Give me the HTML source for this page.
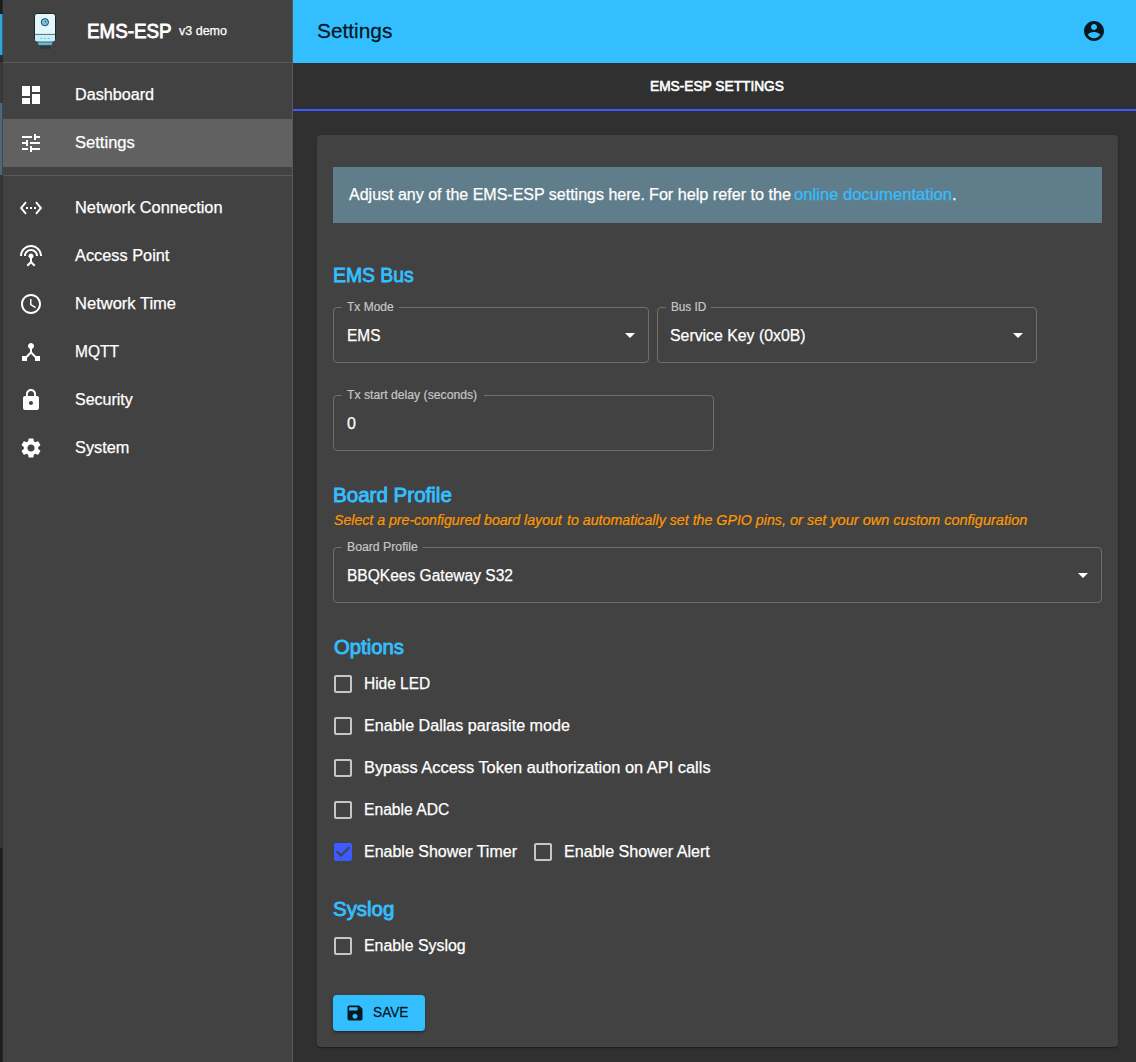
<!DOCTYPE html>
<html><head><meta charset="utf-8"><title>EMS-ESP</title>
<style>
*{box-sizing:border-box;margin:0;padding:0}
html,body{width:1136px;height:1062px;overflow:hidden;background:#303030;font-family:"Liberation Sans",sans-serif;color:#fff}
div,svg{position:absolute}
svg{display:block}
.t{white-space:nowrap;line-height:1;transform-origin:0 0}
.f{height:56px;border:1px solid #6f6f6f;border-radius:4px}
.n{height:3px;background:#424242}
</style></head><body>

<div style="left:0;top:0px;width:3px;height:14px;background:#1c1c1c"></div>
<div style="left:0;top:14px;width:3px;height:41px;background:#2ea6dc"></div>
<div style="left:0;top:55px;width:3px;height:7px;background:#2a2a2a"></div>
<div style="left:0;top:62px;width:3px;height:41px;background:#3a3a3a"></div>
<div style="left:0;top:103px;width:3px;height:72px;background:#4f6878"></div>
<div style="left:0;top:175px;width:3px;height:673px;background:#363636"></div>
<div style="left:0;top:848px;width:3px;height:214px;background:#1e1e1e"></div>
<div style="left:2px;top:0;width:1px;height:1062px;background:rgba(48,48,48,.55)"></div>
<div style="left:3px;top:0;width:290px;height:1062px;background:#424242;border-right:1px solid #595959"></div>
<div style="left:3px;top:62px;width:289px;height:1px;background:#595959"></div>
<div style="left:3px;top:119px;width:289px;height:48px;background:#616161"></div>
<div style="left:3px;top:175px;width:289px;height:1px;background:#595959"></div>
<svg style="left:30px;top:10px;width:30px;height:42px" viewBox="30 10 30 42">
<rect x="40.2" y="45" width="1.3" height="3.8" fill="#2b2b2b"/><rect x="43" y="45" width="1.3" height="3.8" fill="#2b2b2b"/><rect x="45.8" y="45" width="1.3" height="3.8" fill="#2b2b2b"/><rect x="48.6" y="45" width="1.3" height="3.8" fill="#2b2b2b"/>
<path d="M37.8 41.5h14.6v2.2q0 1.6-1.6 1.6h-11.4q-1.6 0-1.6-1.600z" fill="#6bbbd9" stroke="#2a4a58" stroke-width=".5"/>
<rect x="34.5" y="13.5" width="21" height="28.300" rx="2.600" fill="#e1f7fd" stroke="#151515" stroke-width=".9"/>
<path d="M35 34.500h20v4.700q0 2.200-2.200 2.200h-15.600q-2.200 0-2.200-2.200z" fill="#c4effb"/>
<rect x="34.600" y="33.900" width="20.800" height=".8" fill="#3c4a50"/>
<circle cx="44.900" cy="22.200" r="3.600" fill="#7ccbe8" stroke="#1d2c33" stroke-width=".9"/>
<circle cx="44.900" cy="22.200" r="1.900" fill="none" stroke="#5fb3d3" stroke-width=".6"/>
<circle cx="45.500" cy="21.600" r=".6" fill="#1d2c33"/>
<rect x="40.400" y="38" width="1.700" height=".8" fill="#7f9aa3"/><rect x="44.100" y="38" width="1.700" height=".8" fill="#7f9aa3"/><rect x="47.900" y="38" width="1.700" height=".8" fill="#7f9aa3"/>
</svg>
<svg class="i" style="left:19px;top:83px;width:24px;height:24px;fill:#fff" viewBox="0 0 24 24"><path d="M3 13h8V3H3v10zm0 8h8v-6H3v6zm10 0h8V11h-8v10zm0-18v6h8V3h-8z"/></svg>
<svg class="i" style="left:19px;top:131px;width:24px;height:24px;fill:#fff" viewBox="0 0 24 24"><path d="M3 17v2h6v-2H3zM3 5v2h10V5H3zm10 16v-2h8v-2h-8v-2h-2v6h2zM7 9v2H3v2h4v2h2V9H7zm14 4v-2H11v2h10zm-6-4h2V7h4V5h-4V3h-2v6z"/></svg>
<svg class="i" style="left:19px;top:196px;width:24px;height:24px;fill:#fff" viewBox="0 0 24 24"><path d="M7.77 6.76L6.23 5.48.82 12l5.41 6.52 1.54-1.28L3.42 12l4.35-5.24zM7 13h2v-2H7v2zm10-2h-2v2h2v-2zm-6 2h2v-2h-2v2zm6.77-7.52l-1.54 1.28L20.58 12l-4.35 5.24 1.54 1.28L23.18 12l-5.41-6.52z"/></svg>
<svg class="i" style="left:19px;top:244px;width:24px;height:24px;fill:#fff" viewBox="0 0 24 24"><path d="M12 5c-3.87 0-7 3.13-7 7h2c0-2.76 2.24-5 5-5s5 2.24 5 5h2c0-3.87-3.13-7-7-7zm1 9.29c.88-.39 1.5-1.26 1.5-2.29 0-1.38-1.12-2.5-2.5-2.5S9.5 10.62 9.5 12c0 1.02.62 1.9 1.5 2.29v3.3L7.59 21 9 22.41l3-3 3 3L16.41 21 13 17.59v-3.3zM12 1C5.93 1 1 5.93 1 12h2c0-4.97 4.03-9 9-9s9 4.03 9 9h2c0-6.07-4.93-11-11-11z"/></svg>
<svg class="i" style="left:19px;top:292px;width:24px;height:24px;fill:#fff" viewBox="0 0 24 24"><path d="M11.99 2C6.47 2 2 6.48 2 12s4.47 10 9.99 10C17.52 22 22 17.52 22 12S17.52 2 11.99 2zM12 20c-4.42 0-8-3.58-8-8s3.58-8 8-8 8 3.58 8 8-3.58 8-8 8zM12.5 7H11v6l5.25 3.15.75-1.23-4.5-2.67z"/></svg>
<svg class="i" style="left:19px;top:340px;width:24px;height:24px;fill:#fff" viewBox="0 0 24 24"><path d="M17 16l-4-4V8.82C14.16 8.4 15 7.3 15 6c0-1.66-1.34-3-3-3S9 4.34 9 6c0 1.3.84 2.4 2 2.82V12l-4 4H3v5h5v-3.05l4-4.2 4 4.2V21h5v-5h-4z"/></svg>
<svg class="i" style="left:19px;top:388px;width:24px;height:24px;fill:#fff" viewBox="0 0 24 24"><path d="M18 8h-1V6c0-2.76-2.24-5-5-5S7 3.24 7 6v2H6c-1.1 0-2 .9-2 2v10c0 1.1.9 2 2 2h12c1.1 0 2-.9 2-2V10c0-1.1-.9-2-2-2zm-6 9c-1.1 0-2-.9-2-2s.9-2 2-2 2 .9 2 2-.9 2-2 2zm3.1-9H8.9V6c0-1.71 1.39-3.1 3.1-3.1 1.71 0 3.1 1.39 3.1 3.1v2z"/></svg>
<svg class="i" style="left:19px;top:436px;width:24px;height:24px;fill:#fff" viewBox="0 0 24 24"><path d="M19.14 12.94c.04-.3.06-.61.06-.94 0-.32-.02-.64-.07-.94l2.03-1.58c.18-.14.23-.41.12-.61l-1.92-3.32c-.12-.22-.37-.29-.59-.22l-2.39.96c-.5-.38-1.03-.7-1.62-.94l-.36-2.54c-.04-.24-.24-.41-.48-.41h-3.84c-.24 0-.43.17-.47.41l-.36 2.54c-.59.24-1.13.57-1.62.94l-2.39-.96c-.22-.08-.47 0-.59.22L2.74 8.87c-.12.21-.08.47.12.61l2.03 1.58c-.05.3-.09.63-.09.94s.02.64.07.94l-2.03 1.58c-.18.14-.23.41-.12.61l1.92 3.32c.12.22.37.29.59.22l2.39-.96c.5.38 1.03.7 1.62.94l.36 2.54c.05.24.24.41.48.41h3.84c.24 0 .44-.17.47-.41l.36-2.54c.59-.24 1.13-.56 1.62-.94l2.39.96c.22.08.47 0 .59-.22l1.92-3.32c.12-.22.07-.47-.12-.61l-2.01-1.58zM12 15.6c-1.98 0-3.6-1.62-3.6-3.6s1.62-3.6 3.6-3.6 3.6 1.62 3.6 3.6-1.62 3.6-3.6 3.6z"/></svg>
<div style="left:293px;top:0;width:843px;height:63px;background:#33bfff"></div>
<svg class="i" style="left:1082px;top:19px;width:24px;height:24px;fill:rgba(0,0,0,.87)" viewBox="0 0 24 24"><path d="M12 2C6.48 2 2 6.48 2 12s4.48 10 10 10 10-4.48 10-10S17.52 2 12 2zm0 3c1.66 0 3 1.34 3 3s-1.34 3-3 3-3-1.34-3-3 1.34-3 3-3zm0 14.2c-2.5 0-4.71-1.28-6-3.22.03-1.99 4-3.08 6-3.08 1.99 0 5.97 1.09 6 3.08-1.29 1.94-3.5 3.22-6 3.22z"/></svg>
<div style="left:293px;top:109px;width:843px;height:2px;background:#3d5afe"></div>
<div style="left:317px;top:135px;width:801px;height:912px;background:#424242;border-radius:4px;box-shadow:0 2px 1px -1px rgba(0,0,0,.2),0 1px 1px 0 rgba(0,0,0,.14),0 1px 3px 0 rgba(0,0,0,.12)"></div>
<div style="left:333px;top:167px;width:769px;height:56px;background:#607d8b"></div>
<div class="f" style="left:333px;top:307px;width:316px"></div>
<div class="n" style="left:342px;top:306px;width:57.19999999999999px"></div>
<svg class="i" style="left:618px;top:323px;width:24px;height:24px;fill:#fff" viewBox="0 0 24 24"><path d="M7 10l5 5 5-5z"/></svg>
<div class="f" style="left:657px;top:307px;width:380px"></div>
<div class="n" style="left:666px;top:306px;width:45.299999999999955px"></div>
<svg class="i" style="left:1006px;top:323px;width:24px;height:24px;fill:#fff" viewBox="0 0 24 24"><path d="M7 10l5 5 5-5z"/></svg>
<div class="f" style="left:333px;top:395px;width:381px"></div>
<div class="n" style="left:342px;top:394px;width:142px"></div>
<div class="f" style="left:333px;top:547px;width:769px"></div>
<div class="n" style="left:342.2px;top:546px;width:80.80000000000001px"></div>
<svg class="i" style="left:1071px;top:563px;width:24px;height:24px;fill:#fff" viewBox="0 0 24 24"><path d="M7 10l5 5 5-5z"/></svg>
<svg class="i" style="left:331px;top:672px;width:24px;height:24px;fill:#c6c6c6" viewBox="0 0 24 24"><path d="M19 5v14H5V5h14m0-2H5c-1.1 0-2 .9-2 2v14c0 1.1.9 2 2 2h14c1.1 0 2-.9 2-2V5c0-1.1-.9-2-2-2z"/></svg>
<svg class="i" style="left:331px;top:714px;width:24px;height:24px;fill:#c6c6c6" viewBox="0 0 24 24"><path d="M19 5v14H5V5h14m0-2H5c-1.1 0-2 .9-2 2v14c0 1.1.9 2 2 2h14c1.1 0 2-.9 2-2V5c0-1.1-.9-2-2-2z"/></svg>
<svg class="i" style="left:331px;top:756px;width:24px;height:24px;fill:#c6c6c6" viewBox="0 0 24 24"><path d="M19 5v14H5V5h14m0-2H5c-1.1 0-2 .9-2 2v14c0 1.1.9 2 2 2h14c1.1 0 2-.9 2-2V5c0-1.1-.9-2-2-2z"/></svg>
<svg class="i" style="left:331px;top:798px;width:24px;height:24px;fill:#c6c6c6" viewBox="0 0 24 24"><path d="M19 5v14H5V5h14m0-2H5c-1.1 0-2 .9-2 2v14c0 1.1.9 2 2 2h14c1.1 0 2-.9 2-2V5c0-1.1-.9-2-2-2z"/></svg>
<svg class="i" style="left:331px;top:840px;width:24px;height:24px;fill:#3d5afe" viewBox="0 0 24 24"><path d="M19 3H5c-1.11 0-2 .9-2 2v14c0 1.1.89 2 2 2h14c1.11 0 2-.9 2-2V5c0-1.1-.89-2-2-2zm-9 14l-5-5 1.41-1.41L10 14.17l7.59-7.59L19 8l-9 9z"/></svg>
<svg class="i" style="left:531px;top:840px;width:24px;height:24px;fill:#c6c6c6" viewBox="0 0 24 24"><path d="M19 5v14H5V5h14m0-2H5c-1.1 0-2 .9-2 2v14c0 1.1.9 2 2 2h14c1.1 0 2-.9 2-2V5c0-1.1-.9-2-2-2z"/></svg>
<svg class="i" style="left:331px;top:934px;width:24px;height:24px;fill:#c6c6c6" viewBox="0 0 24 24"><path d="M19 5v14H5V5h14m0-2H5c-1.1 0-2 .9-2 2v14c0 1.1.9 2 2 2h14c1.1 0 2-.9 2-2V5c0-1.1-.9-2-2-2z"/></svg>
<div style="left:333px;top:995px;width:92px;height:36px;background:#33bfff;border-radius:4px;box-shadow:0 3px 1px -2px rgba(0,0,0,.2),0 2px 2px 0 rgba(0,0,0,.14),0 1px 5px 0 rgba(0,0,0,.12)"></div>
<svg class="i" style="left:345px;top:1003px;width:20px;height:20px;fill:rgba(0,0,0,.87)" viewBox="0 0 24 24"><path d="M17 3H5c-1.11 0-2 .9-2 2v14c0 1.1.89 2 2 2h14c1.1 0 2-.9 2-2V7l-4-4zm-5 16c-1.66 0-3-1.34-3-3s1.34-3 3-3 3 1.34 3 3-1.34 3-3 3zm3-10H5V5h10v4z"/></svg>
<div class="t" id="brand" style="left:87.00px;top:21.00px;font-size:20px;-webkit-text-stroke:.85px;transform:scaleX(0.9390)">EMS-ESP</div>
<div class="t" id="ver" style="left:179.00px;top:24.00px;font-size:13px;-webkit-text-stroke:.25px;transform:scaleX(0.9627)">v3 demo</div>
<div class="t" id="m1" style="left:75.00px;top:87.00px;font-size:16px;-webkit-text-stroke:.25px;transform:scaleX(1.0104)">Dashboard</div>
<div class="t" id="m2" style="left:75.00px;top:135.00px;font-size:16px;-webkit-text-stroke:.25px;transform:scaleX(1.0350)">Settings</div>
<div class="t" id="m3" style="left:75.00px;top:200.00px;font-size:16px;-webkit-text-stroke:.25px;transform:scaleX(1.0245)">Network Connection</div>
<div class="t" id="m4" style="left:75.00px;top:248.00px;font-size:16px;-webkit-text-stroke:.25px;transform:scaleX(1.0205)">Access Point</div>
<div class="t" id="m5" style="left:75.00px;top:296.00px;font-size:16px;-webkit-text-stroke:.25px;transform:scaleX(1.0331)">Network Time</div>
<div class="t" id="m6" style="left:75.00px;top:344.00px;font-size:16px;-webkit-text-stroke:.25px;transform:scaleX(0.9686)">MQTT</div>
<div class="t" id="m7" style="left:75.00px;top:392.00px;font-size:16px;-webkit-text-stroke:.25px">Security</div>
<div class="t" id="m8" style="left:75.00px;top:440.00px;font-size:16px;-webkit-text-stroke:.25px;transform:scaleX(1.0192)">System</div>
<div class="t" id="title" style="left:317.00px;top:21.00px;font-size:20px;-webkit-text-stroke:.3px;color:rgba(0,0,0,.87);transform:scaleX(1.0423)">Settings</div>
<div class="t" id="tab" style="left:650.00px;top:79.00px;font-size:14px;-webkit-text-stroke:.6px;transform:scaleX(0.9801)">EMS-ESP SETTINGS</div>
<div class="t" id="inf1" style="left:349.00px;top:187.00px;font-size:16px;-webkit-text-stroke:.25px">Adjust any of the EMS-ESP settings here.</div>
<div class="t" id="inf1b" style="left:649.00px;top:187.00px;font-size:16px;-webkit-text-stroke:.25px;transform:scaleX(1.0108)">For help refer to the</div>
<div class="t" id="inf2" style="left:794.00px;top:187.00px;font-size:16px;-webkit-text-stroke:.25px;color:#33bfff;transform:scaleX(1.0394)">online documentation<span style="color:#fff">.</span></div>
<div class="t" id="h1" style="left:333.00px;top:265.00px;font-size:20px;-webkit-text-stroke:.85px;color:#33bfff;transform:scaleX(0.9684)">EMS Bus</div>
<div class="t" id="h2" style="left:333.00px;top:485.00px;font-size:20px;-webkit-text-stroke:.85px;color:#33bfff;transform:scaleX(1.0280)">Board Profile</div>
<div class="t" id="h3" style="left:334.00px;top:637.00px;font-size:20px;-webkit-text-stroke:.85px;color:#33bfff;transform:scaleX(1.0160)">Options</div>
<div class="t" id="h4" style="left:333.00px;top:899.00px;font-size:20px;-webkit-text-stroke:.85px;color:#33bfff;transform:scaleX(1.0220)">Syslog</div>
<div class="t" id="l1" style="left:347.00px;top:301.00px;font-size:12px;-webkit-text-stroke:.2px;color:#c6c6c6">Tx Mode</div>
<div class="t" id="l2" style="left:671.00px;top:301.00px;font-size:12px;-webkit-text-stroke:.2px;color:#c6c6c6;transform:scaleX(0.9771)">Bus ID</div>
<div class="t" id="l3" style="left:347.00px;top:389.00px;font-size:12px;-webkit-text-stroke:.2px;color:#c6c6c6;transform:scaleX(1.0165)">Tx start delay (seconds)</div>
<div class="t" id="l4" style="left:347.00px;top:541.00px;font-size:12px;-webkit-text-stroke:.2px;color:#c6c6c6;transform:scaleX(1.0204)">Board Profile</div>
<div class="t" id="v1" style="left:347.00px;top:328.00px;font-size:16px;-webkit-text-stroke:.25px;transform:scaleX(0.9642)">EMS</div>
<div class="t" id="v2" style="left:670.00px;top:328.00px;font-size:16px;-webkit-text-stroke:.25px;transform:scaleX(0.9904)">Service Key (0x0B)</div>
<div class="t" id="v3" style="left:347.00px;top:416.00px;font-size:16px;-webkit-text-stroke:.25px">0</div>
<div class="t" id="v4" style="left:347.00px;top:568.00px;font-size:16px;-webkit-text-stroke:.25px;transform:scaleX(0.9717)">BBQKees Gateway S32</div>
<div class="t" id="hintA" style="left:334.00px;top:513.00px;font-size:14px;-webkit-text-stroke:.2px;font-style:italic;color:#ff9800;transform:scaleX(1.0093)">Select a pre-configured board layout</div>
<div class="t" id="hintB" style="left:567.00px;top:513.00px;font-size:14px;-webkit-text-stroke:.2px;font-style:italic;color:#ff9800;transform:scaleX(1.0154)">to automatically set the GPIO pins,</div>
<div class="t" id="hintC" style="left:790.00px;top:513.00px;font-size:14px;-webkit-text-stroke:.2px;font-style:italic;color:#ff9800;transform:scaleX(1.0372)">or set your own custom configuration</div>
<div class="t" id="c1" style="left:364.00px;top:676.00px;font-size:16px;-webkit-text-stroke:.25px;transform:scaleX(0.9659)">Hide LED</div>
<div class="t" id="c2" style="left:364.00px;top:718.00px;font-size:16px;-webkit-text-stroke:.25px;transform:scaleX(1.0064)">Enable Dallas parasite mode</div>
<div class="t" id="c3" style="left:364.00px;top:760.00px;font-size:16px;-webkit-text-stroke:.25px;transform:scaleX(1.0237)">Bypass Access Token authorization on API calls</div>
<div class="t" id="c4" style="left:364.00px;top:802.00px;font-size:16px;-webkit-text-stroke:.25px;transform:scaleX(0.9778)">Enable ADC</div>
<div class="t" id="c5" style="left:364.00px;top:844.00px;font-size:16px;-webkit-text-stroke:.25px">Enable Shower Timer</div>
<div class="t" id="c6" style="left:564.00px;top:844.00px;font-size:16px;-webkit-text-stroke:.25px;transform:scaleX(1.0055)">Enable Shower Alert</div>
<div class="t" id="c7" style="left:364.00px;top:938.00px;font-size:16px;-webkit-text-stroke:.25px;transform:scaleX(0.9931)">Enable Syslog</div>
<div class="t" id="savet" style="left:373.00px;top:1005.00px;font-size:14px;-webkit-text-stroke:.3px;color:rgba(0,0,0,.87);transform:scaleX(0.9775)">SAVE</div>
</body></html>
